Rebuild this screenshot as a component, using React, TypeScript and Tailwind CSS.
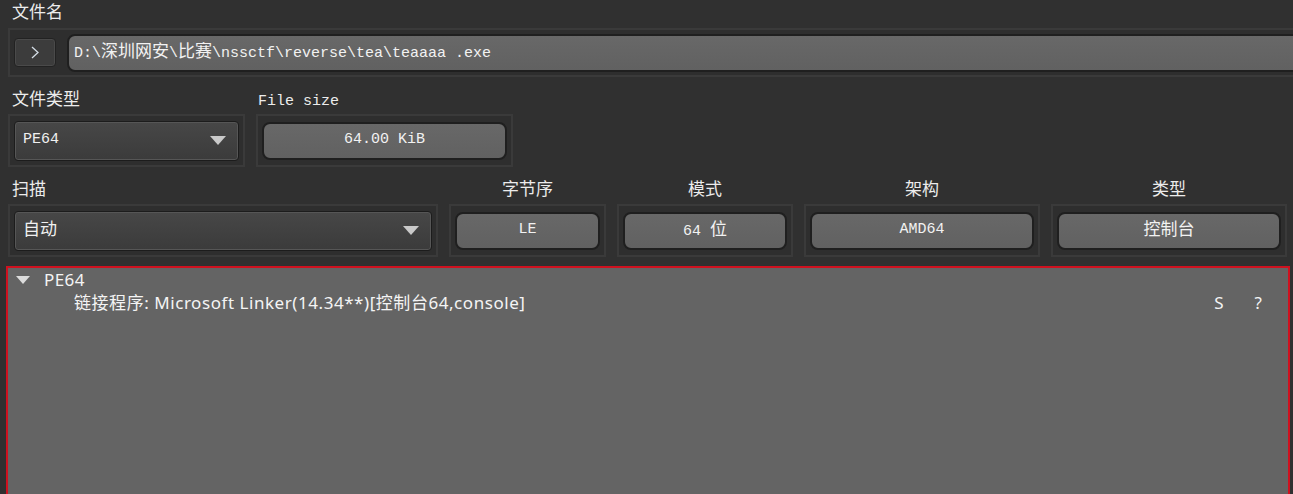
import React from "react";

const CJK = /[\u3000-\u9fff\uff00-\uffef]/;

// wraps CJK runs in a slightly larger span, like the original UI font fallback
function Mixed({ text }: { text: string }) {
  const runs: { s: string; cjk: boolean }[] = [];
  for (const ch of text) {
    const isCjk = CJK.test(ch);
    const last = runs[runs.length - 1];
    if (last && last.cjk === isCjk) last.s += ch;
    else runs.push({ s: ch, cjk: isCjk });
  }
  return (
    <span className="whitespace-pre">
      {runs.map((r, i) =>
        r.cjk ? (
          <span key={i} className="text-[17px]">
            {r.s}
          </span>
        ) : (
          <span key={i}>{r.s}</span>
        ),
      )}
    </span>
  );
}

function Frame({
  className,
  children,
}: {
  className?: string;
  children: React.ReactNode;
}) {
  return (
    <div
      className={`h-[53px] border-2 border-[#3a3a3a] bg-[#2e2e2e] flex items-center px-[4px] ${className ?? ""}`}
    >
      {children}
    </div>
  );
}

function ValueField({ value }: { value: string }) {
  return (
    <div className="flex-1 h-[38px] rounded-[8px] border-2 border-[#1f1f1f] bg-gradient-to-b from-[#686868] to-[#616161] flex items-center justify-center text-[#f2f2f2]">
      <Mixed text={value} />
    </div>
  );
}

function Combo({ value }: { value: string }) {
  return (
    <div className="flex-1 h-[40px] rounded-[4px] border border-[#1c1c1c] shadow-[inset_0_0_0_1px_#565656] bg-gradient-to-b from-[#474747] to-[#3b3b3b] flex items-center justify-between pl-[8px] pr-[12px] text-[#f0f0f0]">
      <Mixed text={value} />
      <svg width="16" height="10" viewBox="0 0 16 10">
        <polygon points="0,0 16,0 8,9" fill="#c9c9c9" />
      </svg>
    </div>
  );
}

function Column({
  label,
  width,
  left,
  children,
}: {
  label: string;
  width: string;
  left?: boolean;
  children: React.ReactNode;
}) {
  return (
    <div className={`flex flex-col ${width}`}>
      <div
        className={`h-[37px] pt-[14px] leading-[20px] ${left ? "pl-[4px]" : "text-center"}`}
      >
        <Mixed text={label} />
      </div>
      <Frame>{children}</Frame>
    </div>
  );
}

export default function App() {
  return (
    <div className="w-[1293px] h-[494px] overflow-hidden bg-[#303030] text-[#ececec] text-[15px] font-['Liberation_Mono','Noto_Sans_CJK_SC',monospace] pl-[8px]">
      {/* file name */}
      <div className="h-[28px] pt-[4px] pl-[4px] leading-[20px]">
        <Mixed text="文件名" />
      </div>
      <div className="w-[1300px] h-[49px] border-2 border-[#3a3a3a] bg-[#2e2e2e] flex items-center pl-[4px] gap-[11px]">
        <div className="w-[42px] h-[29px] rounded-[4px] border border-[#222] shadow-[inset_0_0_0_1px_#4a4a4a] bg-[#3c3c3c] flex items-center justify-center">
          <svg width="8" height="13" viewBox="0 0 8 13">
            <polyline
              points="1,1 7,6.5 1,12"
              fill="none"
              stroke="#d4dde6"
              strokeWidth="1.3"
            />
          </svg>
        </div>
        <div className="flex-1 h-[38px] rounded-[8px] border-2 border-[#1f1f1f] bg-gradient-to-b from-[#686868] to-[#616161] flex items-center pl-[5px] text-[#f2f2f2]">
          <Mixed text="D:\深圳网安\比赛\nssctf\reverse\tea\teaaaa .exe" />
        </div>
      </div>

      {/* type / size */}
      <div className="flex gap-[11px]">
        <Column label="文件类型" width="w-[237px]" left>
          <Combo value="PE64" />
        </Column>
        <div className="flex flex-col w-[257px]">
          <div className="h-[37px] pt-[15px] leading-[20px] pl-[2px]">
            File size
          </div>
          <Frame>
            <ValueField value="64.00 KiB" />
          </Frame>
        </div>
      </div>

      {/* scan row */}
      <div className="flex gap-[11px]">
        <Column label="扫描" width="w-[430px]" left>
          <Combo value="自动" />
        </Column>
        <Column label="字节序" width="w-[157px]">
          <ValueField value="LE" />
        </Column>
        <Column label="模式" width="w-[176px]">
          <ValueField value="64 位" />
        </Column>
        <Column label="架构" width="w-[236px]">
          <ValueField value="AMD64" />
        </Column>
        <Column label="类型" width="w-[236px]">
          <ValueField value="控制台" />
        </Column>
      </div>

      {/* result tree */}
      <div className="mt-[9px] -ml-[2px] w-[1284px] h-[240px] border-2 border-[#cf111f] bg-[#646464] text-[#f4f4f4] text-[17px] font-['Noto_Sans','Noto_Sans_CJK_SC',sans-serif] pt-[2px]">
        <div className="flex items-center h-[20px] leading-[20px]">
          <svg
            width="14"
            height="9"
            viewBox="0 0 14 9"
            className="ml-[8px] mr-[14px]"
          >
            <polygon points="0,0 14,0 7,8" fill="#dcdcdc" />
          </svg>
          <span className="tracking-[0.4px]">PE64</span>
        </div>
        <div className="flex items-center h-[26px] leading-[26px]">
          <span className="ml-[66px] tracking-[0.55px]">
            链接程序: Microsoft Linker(14.34**)[控制台64,console]
          </span>
          <span className="ml-auto">S</span>
          <span className="ml-[31px] mr-[26px]">?</span>
        </div>
      </div>
    </div>
  );
}
